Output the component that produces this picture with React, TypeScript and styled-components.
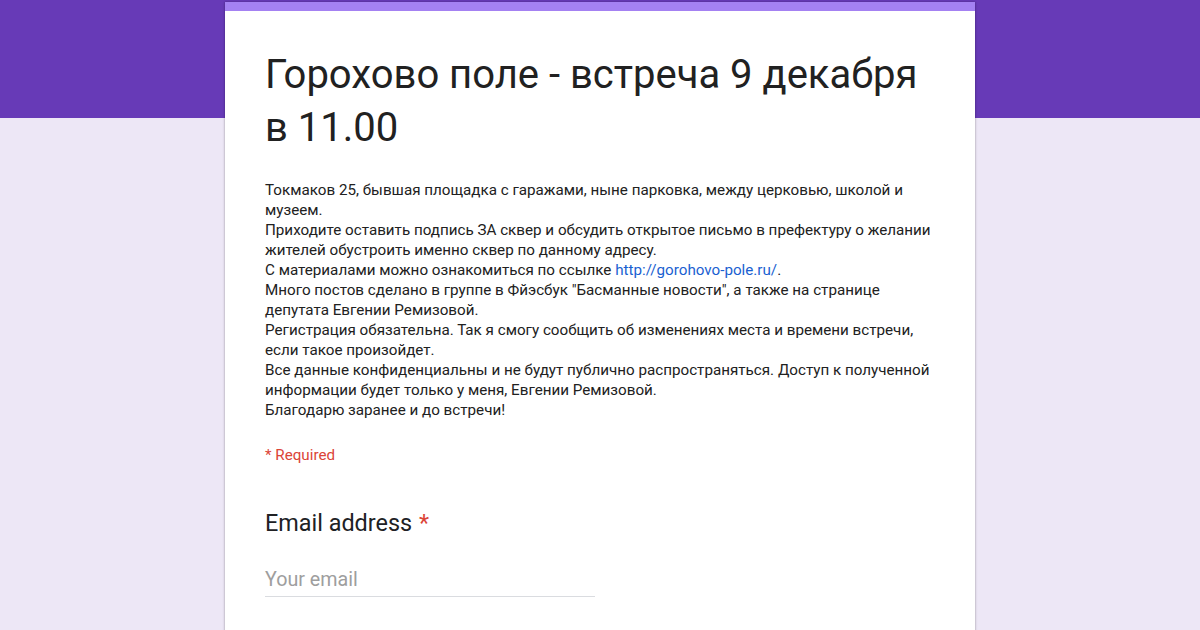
import React from "react";
import styled, { createGlobalStyle } from "styled-components";

const Global = createGlobalStyle`
  html, body { margin: 0; padding: 0; }
  body {
    width: 1200px;
    height: 630px;
    overflow: hidden;
    font-family: Roboto, "Liberation Sans", Arial, sans-serif;
    background: linear-gradient(to bottom, #673ab7 0, #673ab7 118px, #ede7f6 118px, #ede7f6 100%);
  }
`;

const Page = styled.div`
  display: flex;
  justify-content: center;
  padding-top: 2px;
`;

const Card = styled.div`
  width: 750px;
  min-height: 640px;
  background: #ffffff;
  border-top: 9px solid #a481f2;
  box-shadow: 0 0 2px rgba(0, 0, 0, 0.25), 0 1px 3px rgba(0, 0, 0, 0.15);
  box-sizing: border-box;
  padding: 37px 40px 0 40px;
  color: #202124;
`;

const Title = styled.h1`
  margin: 0;
  font-weight: 400;
  font-size: 40px;
  line-height: 53px;
  color: #212121;
`;

const Description = styled.div`
  margin-top: 26px;
  font-size: 15.2px;
  line-height: 20px;
  color: #212121;
`;

const Line = styled.div``;

const Link = styled.a`
  color: #1a5fd1;
  text-decoration: none;
`;

const Required = styled.div`
  margin-top: 25px;
  font-size: 15.2px;
  line-height: 20px;
  color: #db4437;
`;

const Question = styled.div`
  margin-top: 43px;
  display: flex;
  flex-direction: column;
`;

const Label = styled.div`
  font-size: 23.4px;
  line-height: 30px;
  color: #202124;
`;

const Star = styled.span`
  color: #db4437;
  margin-left: 7px;
`;

const Input = styled.div`
  margin-top: 29px;
  width: 330px;
  font-size: 19.7px;
  line-height: 26px;
  color: #9e9e9e;
  border-bottom: 1px solid #dadce0;
  padding-bottom: 3px;
`;

export default function App() {
  const lines: React.ReactNode[] = [
    "Токмаков 25, бывшая площадка с гаражами, ныне парковка, между церковью, школой и",
    "музеем.",
    "Приходите оставить подпись ЗА сквер и обсудить открытое письмо в префектуру о желании",
    "жителей обустроить именно сквер по данному адресу.",
    <>
      С материалами можно ознакомиться по ссылке{" "}
      <Link href="#">http://gorohovo-pole.ru/</Link>.
    </>,
    "Много постов сделано в группе в Фйэсбук \"Басманные новости\", а также на странице",
    "депутата Евгении Ремизовой.",
    "Регистрация обязательна. Так я смогу сообщить об изменениях места и времени встречи,",
    "если такое произойдет.",
    "Все данные конфиденциальны и не будут публично распространяться. Доступ к полученной",
    "информации будет только у меня, Евгении Ремизовой.",
    "Благодарю заранее и до встречи!",
  ];
  return (
    <>
      <Global />
      <Page>
        <Card>
          <Title>
            Горохово поле - встреча 9 декабря
            <br />в 11.00
          </Title>
          <Description>
            {lines.map((l, i) => (
              <Line key={i}>{l}</Line>
            ))}
          </Description>
          <Required>* Required</Required>
          <Question>
            <Label>
              Email address<Star>*</Star>
            </Label>
            <Input>Your email</Input>
          </Question>
        </Card>
      </Page>
    </>
  );
}
